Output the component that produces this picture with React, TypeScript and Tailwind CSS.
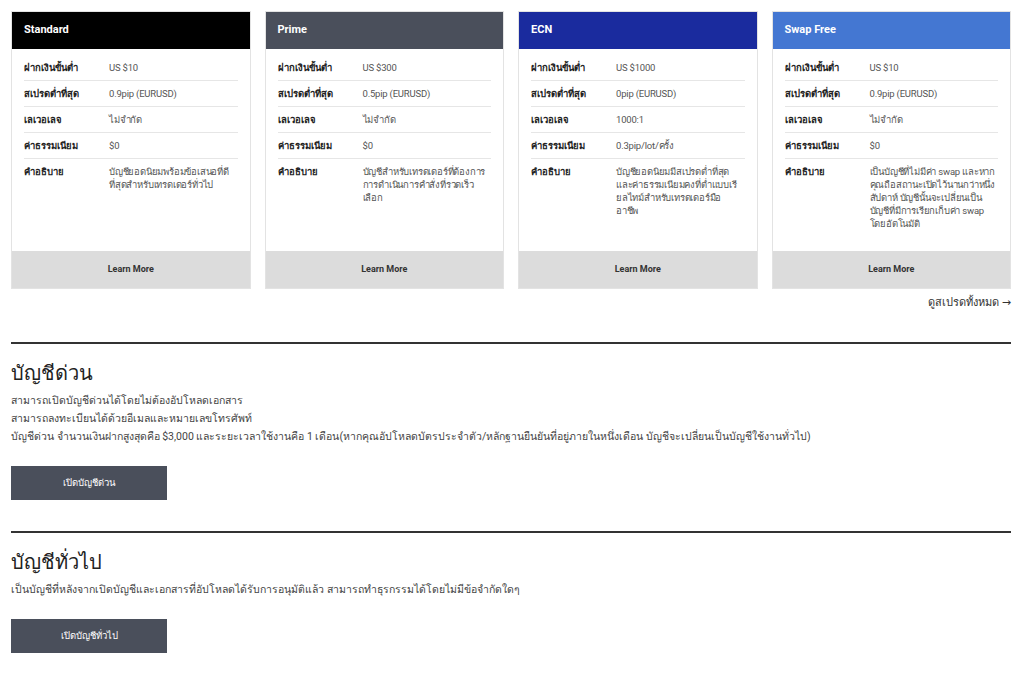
import React from "react";

type Plan = {
  name: string;
  headerClass: string;
  rows: [string, string][];
};

const plans: Plan[] = [
  {
    name: "Standard",
    headerClass: "bg-black",
    rows: [
      ["ฝากเงินขั้นต่ำ", "US $10"],
      ["สเปรดต่ำที่สุด", "0.9pip (EURUSD)"],
      ["เลเวอเลจ", "ไม่จำกัด"],
      ["ค่าธรรมเนียม", "$0"],
      ["คำอธิบาย", "บัญชียอดนิยมพร้อมข้อเสนอที่ดีที่สุดสำหรับเทรดเดอร์ทั่วไป"],
    ],
  },
  {
    name: "Prime",
    headerClass: "bg-[#4a4f5b]",
    rows: [
      ["ฝากเงินขั้นต่ำ", "US $300"],
      ["สเปรดต่ำที่สุด", "0.5pip (EURUSD)"],
      ["เลเวอเลจ", "ไม่จำกัด"],
      ["ค่าธรรมเนียม", "$0"],
      ["คำอธิบาย", "บัญชีสำหรับเทรดเดอร์ที่ต้องการการดำเนินการคำสั่งที่รวดเร็วเลือก"],
    ],
  },
  {
    name: "ECN",
    headerClass: "bg-[#1a2b9e]",
    rows: [
      ["ฝากเงินขั้นต่ำ", "US $1000"],
      ["สเปรดต่ำที่สุด", "0pip (EURUSD)"],
      ["เลเวอเลจ", "1000:1"],
      ["ค่าธรรมเนียม", "0.3pip/lot/ครั้ง"],
      ["คำอธิบาย", "บัญชียอดนิยมมีสเปรดต่ำที่สุดและค่าธรรมเนียมคงที่ต่ำแบบเรียลไทม์สำหรับเทรดเดอร์มืออาชีพ"],
    ],
  },
  {
    name: "Swap Free",
    headerClass: "bg-[#4477d2]",
    rows: [
      ["ฝากเงินขั้นต่ำ", "US $10"],
      ["สเปรดต่ำที่สุด", "0.9pip (EURUSD)"],
      ["เลเวอเลจ", "ไม่จำกัด"],
      ["ค่าธรรมเนียม", "$0"],
      [
        "คำอธิบาย",
        "เป็นบัญชีที่ไม่มีค่า swap และหากคุณถือสถานะเปิดไว้นานกว่าหนึ่งสัปดาห์ บัญชีนั้นจะเปลี่ยนเป็นบัญชีที่มีการเรียกเก็บค่า swap โดยอัตโนมัติ",
      ],
    ],
  },
];

function PlanCard({ plan }: { plan: Plan }) {
  return (
    <div className="flex flex-col border border-[#e3e3e3] bg-white">
      <div className={`${plan.headerClass} flex h-[37px] items-center px-[12px] text-[11px] font-bold text-white`}>
        {plan.name}
      </div>
      <div className="h-[202px] px-[12px] pt-[6px]">
        {plan.rows.map(([label, value], i) => (
          <div
            key={label}
            className={`flex py-[6px] text-[9.5px] leading-[13px] ${
              i < plan.rows.length - 1 ? "border-b border-[#e6e6e6]" : ""
            }`}
          >
            <div className="w-[85px] shrink-0 font-bold text-[#222]">{label}</div>
            <div className="flex-1 pr-[2px] tracking-[-0.2px] text-[#555]">{value}</div>
          </div>
        ))}
      </div>
      <div className="flex h-[37px] items-center justify-center bg-[#dcdcdc] text-[9px] font-bold text-[#333]">
        Learn More
      </div>
    </div>
  );
}

function AccountSection({
  title,
  lines,
  button,
}: {
  title: string;
  lines: string[];
  button: string;
}) {
  return (
    <section className="mt-[31px]">
      <div className="h-[2px] bg-[#333]" />
      <h2 className="mt-[15px] text-[20px] leading-[28px] font-medium text-[#222]">{title}</h2>
      <div className="mt-[5px] text-[10.5px] leading-[18px] text-[#444]">
        {lines.map((l) => (
          <p key={l}>{l}</p>
        ))}
      </div>
      <button className="mt-[20px] flex h-[34px] w-[156px] items-center justify-center bg-[#4a4f5b] text-[9.5px] text-white">
        {button}
      </button>
    </section>
  );
}

export default function App() {
  return (
    <div
      className="min-h-[696px] bg-white pl-[11px] pr-[13px] pt-[11px] pb-[40px]"
      style={{ fontFamily: 'Roboto, "Noto Sans", "DejaVu Sans", sans-serif' }}
    >
      <div className="grid grid-cols-4 gap-[14px]">
        {plans.map((p) => (
          <PlanCard key={p.name} plan={p} />
        ))}
      </div>
      <div className="mt-[6px] flex justify-end text-[11px] leading-[16px] text-[#333]">
        <a href="#">ดูสเปรดทั้งหมด →</a>
      </div>
      <AccountSection
        title="บัญชีด่วน"
        lines={[
          "สามารถเปิดบัญชีด่วนได้โดยไม่ต้องอัปโหลดเอกสาร",
          "สามารถลงทะเบียนได้ด้วยอีเมลและหมายเลขโทรศัพท์",
          "บัญชีด่วน จำนวนเงินฝากสูงสุดคือ $3,000 และระยะเวลาใช้งานคือ 1 เดือน(หากคุณอัปโหลดบัตรประจำตัว/หลักฐานยืนยันที่อยู่ภายในหนึ่งเดือน บัญชีจะเปลี่ยนเป็นบัญชีใช้งานทั่วไป)",
        ]}
        button="เปิดบัญชีด่วน"
      />
      <AccountSection
        title="บัญชีทั่วไป"
        lines={[
          "เป็นบัญชีที่หลังจากเปิดบัญชีและเอกสารที่อัปโหลดได้รับการอนุมัติแล้ว สามารถทำธุรกรรมได้โดยไม่มีข้อจำกัดใดๆ",
        ]}
        button="เปิดบัญชีทั่วไป"
      />
    </div>
  );
}
